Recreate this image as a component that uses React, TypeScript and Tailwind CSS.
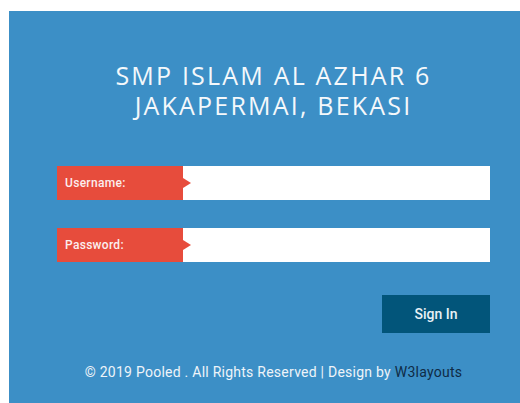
export default function App() {
  return (
    <div className="w-[520px] h-[403px] overflow-hidden bg-white">
      <div className="ml-[9px] mt-[11px] w-[529px] h-[420px] bg-[#3c8fc6] pt-[49px] px-[48px] font-['Roboto',sans-serif]">
        <h1 className="text-center text-[25px] leading-[30px] tracking-[2.2px] text-[#f4f8fb] font-['Open_Sans',sans-serif] font-normal">
          <span className="block">SMP ISLAM AL AZHAR 6</span>
          <span className="block">JAKAPERMAI, BEKASI</span>
        </h1>

        <form className="mt-[46px] flex flex-col gap-[28px]" onSubmit={(e) => e.preventDefault()}>
          {["Username:", "Password:"].map((label) => (
            <div key={label} className="flex h-[34px]">
              <div className="relative w-[126px] bg-[#e74c3c] flex items-center pl-[8px] text-[12px] font-medium text-[#fbeeee] tracking-[0.3px]">
                {label}
                <span className="absolute right-[-8px] top-1/2 -translate-y-1/2 w-0 h-0 border-y-[5px] border-y-transparent border-l-[8px] border-l-[#e74c3c]" />
              </div>
              <input
                type={label === "Password:" ? "password" : "text"}
                className="flex-1 bg-white outline-none"
              />
            </div>
          ))}
          <div className="flex justify-end mt-[5px]">
            <button
              type="submit"
              className="w-[108px] h-[38px] bg-[#02557a] text-[14px] font-medium text-[#e8f1f6]"
            >
              Sign In
            </button>
          </div>
        </form>

        <p className="mt-[29px] text-center text-[14px] tracking-[0.25px] text-[#eef4f9]">
          © 2019 Pooled . All Rights Reserved | Design by{" "}
          <a className="text-[#0f2b45]">W3layouts</a>
        </p>
      </div>
    </div>
  );
}
